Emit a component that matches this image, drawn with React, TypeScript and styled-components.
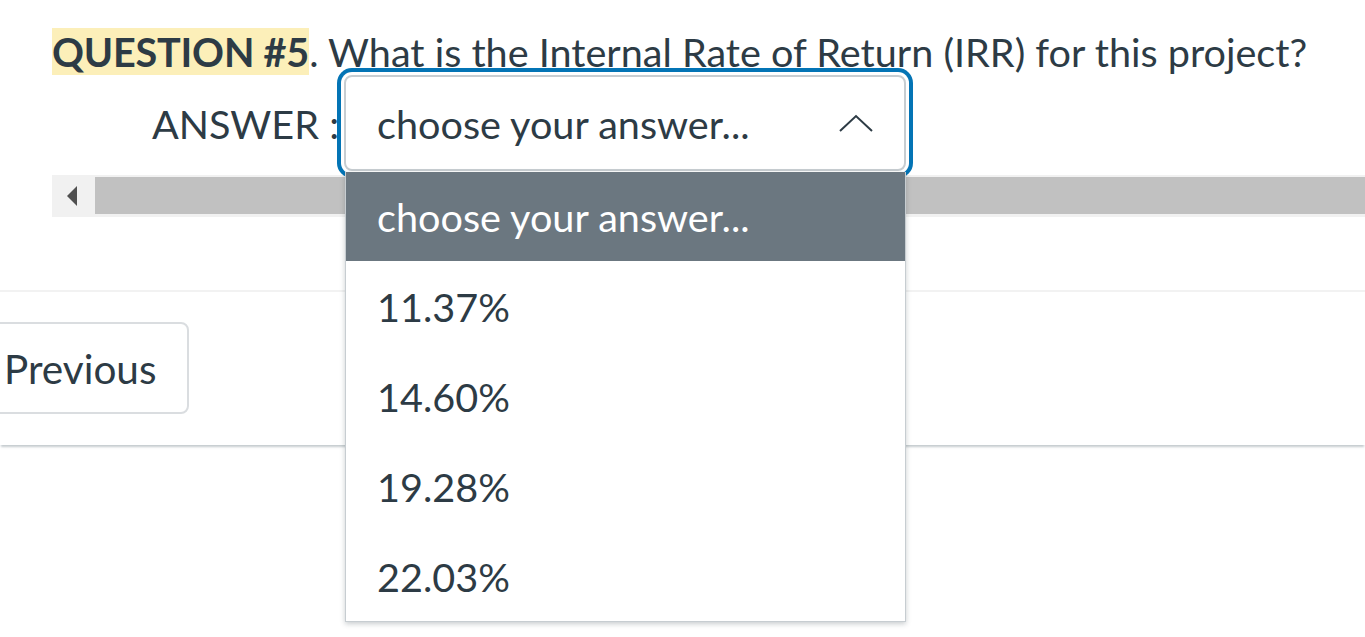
import styled, { createGlobalStyle } from 'styled-components';

const GlobalStyle = createGlobalStyle`
  html, body {
    margin: 0;
    padding: 0;
    background: #ffffff;
    overflow: hidden;
  }
  body {
    font-family: Lato, "Noto Sans", sans-serif;
    color: #2d3b45;
  }
`;

const Page = styled.div`
  width: 1365px;
  height: 637px;
  overflow: hidden;
  background: #ffffff;
`;

const QuestionBlock = styled.div`
  padding: 28px 0 0 52px;
  font-size: 39.6px;
  line-height: 47px;
`;

const QuestionLine = styled.div`
  white-space: nowrap;
`;

const Highlight = styled.span`
  background: #fcefb9;
  font-weight: 700;
  letter-spacing: -0.2px;
`;

const AnswerRow = styled.div`
  display: flex;
  align-items: center;
  margin-left: 100px;
  height: 96px;
`;

const AnswerLabel = styled.span`
  margin-right: 5px;
  white-space: nowrap;
`;

const SelectWrap = styled.div`
  position: relative;
`;

const SelectBox = styled.div`
  box-sizing: border-box;
  width: 562px;
  height: 96px;
  display: flex;
  align-items: center;
  justify-content: space-between;
  padding: 0 30px 0 31px;
  border: 2px solid #c7cdd1;
  border-radius: 8px;
  background: #ffffff;
  box-shadow: 0 0 0 3px #ffffff, 0 0 0 7px #0374b5;
`;

const Listbox = styled.ul`
  position: absolute;
  top: 97px;
  left: 1px;
  width: 561px;
  margin: 0;
  padding: 0;
  list-style: none;
  background: #ffffff;
  border: 1px solid #c7cdd1;
  border-top: none;
  box-sizing: border-box;
  box-shadow: 0 2px 5px rgba(45, 59, 69, 0.25);
  z-index: 2;
`;

const Option = styled.li<{ $active?: boolean }>`
  height: ${({ $active }) => ($active ? '89px' : '90px')};
  display: flex;
  align-items: center;
  padding-left: 31px;
  background: ${({ $active }) => ($active ? '#6b7780' : '#ffffff')};
  color: ${({ $active }) => ($active ? '#ffffff' : '#2d3b45')};
`;

const ScrollBar = styled.div`
  display: flex;
  height: 42px;
  margin-top: 4px;
  background: #f1f1f1;
`;

const ScrollButton = styled.div`
  width: 43px;
  display: flex;
  align-items: center;
  justify-content: center;
`;

const Arrow = styled.div`
  width: 0;
  height: 0;
  border-top: 10px solid transparent;
  border-bottom: 10px solid transparent;
  border-right: 10px solid #505050;
  margin-left: -4px;
`;

const Thumb = styled.div`
  flex: 1;
  margin: 2px 0 3px;
  background: #c1c1c1;
`;

const Footer = styled.div`
  margin-top: 73px;
  height: 155px;
  border-top: 2px solid #f2f2f2;
  box-sizing: border-box;
  padding-top: 30px;
  box-shadow: 0 3px 2px -1px rgba(150, 160, 168, 0.55);
`;

const PrevButton = styled.button`
  margin-left: -30px;
  height: 92px;
  padding: 0 31px 0 32px;
  border: 2px solid #dadde0;
  border-radius: 8px;
  background: #ffffff;
  font-family: Lato, "Noto Sans", sans-serif;
  font-size: 40.5px;
  color: #2d3b45;
`;

const options = ['11.37%', '14.60%', '19.28%', '22.03%'];

export default function App() {
  return (
    <Page>
      <GlobalStyle />
      <QuestionBlock>
        <QuestionLine>
          <Highlight>QUESTION #5</Highlight>. What is the Internal Rate of Return (IRR) for this project?
        </QuestionLine>
        <AnswerRow>
          <AnswerLabel>ANSWER :</AnswerLabel>
          <SelectWrap>
            <SelectBox>
              <span>choose your answer...</span>
              <svg width="36" height="20" viewBox="0 0 36 20">
                <polyline points="2,18 18,3 34,18" fill="none" stroke="#2d3b45" strokeWidth="2" />
              </svg>
            </SelectBox>
            <Listbox>
              <Option $active>choose your answer...</Option>
              {options.map(o => (
                <Option key={o}>{o}</Option>
              ))}
            </Listbox>
          </SelectWrap>
        </AnswerRow>
        <ScrollBar>
          <ScrollButton>
            <Arrow />
          </ScrollButton>
          <Thumb />
        </ScrollBar>
      </QuestionBlock>
      <Footer>
        <PrevButton>Previous</PrevButton>
      </Footer>
    </Page>
  );
}
